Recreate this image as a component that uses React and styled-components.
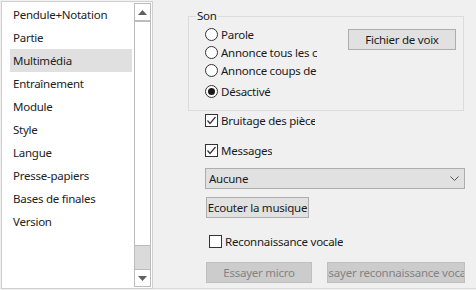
import React from 'react'
import styled, { createGlobalStyle } from 'styled-components'

const GlobalStyle = createGlobalStyle`
  html, body {
    margin: 0;
    padding: 0;
    background: #f0f0f0;
  }
  body {
    font-family: "Noto Sans", "Open Sans", sans-serif;
    font-size: 11.5px;
    letter-spacing: -0.25px;
    color: #1a1a1a;
  }
`;

const pages = [
    'Pendule+Notation',
    'Partie',
    'Multimédia',
    'Entraînement',
    'Module',
    'Style',
    'Langue',
    'Presse-papiers',
    'Bases de finales',
    'Version',
];

function App() {
    return (
        <Window>
            <GlobalStyle />
            <ListBox>
                <Items>
                    {pages.map((p) => (
                        <Item key={p} selected={p === 'Multimédia'}>{p}</Item>
                    ))}
                </Items>
                <ScrollBar>
                    <Arrow>
                        <svg width="9" height="5" viewBox="0 0 9 5"><path d="M0 5 L4.5 0 L9 5 Z" fill="#606060" /></svg>
                    </Arrow>
                    <Thumb />
                    <Track />
                    <Arrow down>
                        <svg width="9" height="5" viewBox="0 0 9 5"><path d="M0 0 L4.5 5 L9 0 Z" fill="#606060" /></svg>
                    </Arrow>
                </ScrollBar>
            </ListBox>

            <Panel>
                <Group>
                    <Legend>Son</Legend>
                    <Radios>
                        <RadioRow><Radio />Parole</RadioRow>
                        <RadioRow><Radio />Annonce tous les coups</RadioRow>
                        <RadioRow><Radio />Annonce coups de l'ordinateur</RadioRow>
                        <RadioRow last><Radio checked />Désactivé</RadioRow>
                    </Radios>
                    <Button width={108} style={{ marginLeft: 31, marginTop: 4 }}>Fichier de voix</Button>
                </Group>

                <CheckRow top={3} left={17} clip><Check checked />Bruitage des pièces</CheckRow>
                <CheckRow top={17} left={17} clip><Check checked />Messages</CheckRow>

                <Select>
                    Aucune
                    <svg width="9" height="5" viewBox="0 0 9 5">
                        <path d="M0.5 0.5 L4.5 4.5 L8.5 0.5" fill="none" stroke="#555" strokeWidth="1" />
                    </svg>
                </Select>

                <Button width={103} style={{ marginTop: 8, marginLeft: 18 }}>Ecouter la musique</Button>

                <CheckRow top={17} left={21}><Check />Reconnaissance vocale</CheckRow>

                <ButtonRow>
                    <Button width={106} disabled>Essayer micro</Button>
                    <Button width={138} disabled>Essayer reconnaissance vocale</Button>
                </ButtonRow>
            </Panel>
        </Window>
    )
}

function Radio({ checked }) {
    return <RadioCircle>{checked && <Dot />}</RadioCircle>
}

function Check({ checked }) {
    return (
        <CheckBox>
            {checked && (
                <svg width="11" height="11" viewBox="0 0 11 11">
                    <path d="M1.5 5.5 L4 8.5 L9.5 2" fill="none" stroke="#333" strokeWidth="1.2" />
                </svg>
            )}
        </CheckBox>
    )
}

const Window = styled.div`
    width: 476px;
    height: 290px;
    display: flex;
    overflow: hidden;
    background: #f0f0f0;
`;

const ListBox = styled.div`
    margin: 1px 0 0 1px;
    width: 152px;
    height: 288px;
    box-sizing: border-box;
    border: 1px solid #cfcfcf;
    padding: 1px;
    background: #fff;
    display: flex;
`;

const Items = styled.div`
    flex: 1;
    display: flex;
    flex-direction: column;
    padding: 0 2px 0 7px;
`;

const Item = styled.div`
    height: 23px;
    line-height: 23px;
    padding-left: 3px;
    white-space: nowrap;
    color: #222;
    background: ${(p) => (p.selected ? '#e0e0e0' : 'transparent')};
`;

const ScrollBar = styled.div`
    width: 17px;
    box-sizing: border-box;
    border: 1px solid #bcbcbc;
    display: flex;
    flex-direction: column;
    background: #fff;
`;

const Arrow = styled.div`
    height: 16px;
    display: flex;
    align-items: center;
    justify-content: center;
    ${(p) => (p.down ? 'border-top: 1px solid #bcbcbc;' : 'border-bottom: 2px solid #bcbcbc;')}
`;

const Thumb = styled.div`
    height: 223px;
    border-bottom: 1px solid #bcbcbc;
    background: #fff;
`;

const Track = styled.div`
    flex: 1;
    background: #dadada;
`;

const Panel = styled.div`
    flex: 1;
    height: 289px;
    box-sizing: border-box;
    border-bottom: 1px solid #dadada;
    display: flex;
    flex-direction: column;
    align-items: flex-start;
    padding: 16px 0 0 35px;
`;

const Group = styled.div`
    position: relative;
    width: 276px;
    height: 95px;
    box-sizing: border-box;
    border: 1px solid #dcdcdc;
    display: flex;
    align-items: flex-start;
    padding: 8px 0 0 16px;
`;

const Legend = styled.span`
    position: absolute;
    top: -9px;
    left: 7px;
    padding: 0 1px;
    line-height: 16px;
    background: #f0f0f0;
`;

const Radios = styled.div`
    width: 112px;
    display: flex;
    flex-direction: column;
    overflow: hidden;
`;

const RadioRow = styled.div`
    height: 18px;
    display: flex;
    align-items: center;
    gap: 3px;
    white-space: nowrap;
    margin-top: ${(p) => (p.last ? '3px' : '0')};
`;

const RadioCircle = styled.span`
    flex: none;
    width: 13px;
    height: 13px;
    box-sizing: border-box;
    border: 1px solid #333;
    border-radius: 50%;
    background: #fff;
    display: flex;
    align-items: center;
    justify-content: center;
`;

const Dot = styled.span`
    width: 7px;
    height: 7px;
    border-radius: 50%;
    background: #1a1a1a;
`;

const CheckRow = styled.div`
    height: 16px;
    display: flex;
    align-items: center;
    gap: 3px;
    white-space: nowrap;
    overflow: hidden;
    max-width: ${(p) => (p.clip ? 110 : 300)}px;
    margin-top: ${(p) => p.top - 2}px;
    margin-bottom: -1px;
    margin-left: ${(p) => p.left}px;
`;

const CheckBox = styled.span`
    flex: none;
    width: 13px;
    height: 13px;
    box-sizing: border-box;
    border: 1px solid #333;
    background: #fff;
    display: flex;
    align-items: center;
    justify-content: center;
`;

const Select = styled.div`
    margin: 11px 0 0 17px;
    width: 260px;
    height: 21px;
    box-sizing: border-box;
    border: 1px solid #adadad;
    background: #e1e1e1;
    display: flex;
    align-items: center;
    justify-content: space-between;
    padding: 0 5px 0 3px;
`;

const Button = styled.div`
    width: ${(p) => p.width}px;
    height: 21px;
    box-sizing: border-box;
    border: 1px solid ${(p) => (p.disabled ? '#bfbfbf' : '#adadad')};
    background: ${(p) => (p.disabled ? '#cccccc' : '#e1e1e1')};
    color: ${(p) => (p.disabled ? '#838383' : '#1a1a1a')};
    display: flex;
    align-items: center;
    justify-content: center;
    white-space: nowrap;
    overflow: hidden;
    flex: none;
`;

const ButtonRow = styled.div`
    display: flex;
    gap: 15px;
    margin: 14px 0 0 18px;
`;

export default App
